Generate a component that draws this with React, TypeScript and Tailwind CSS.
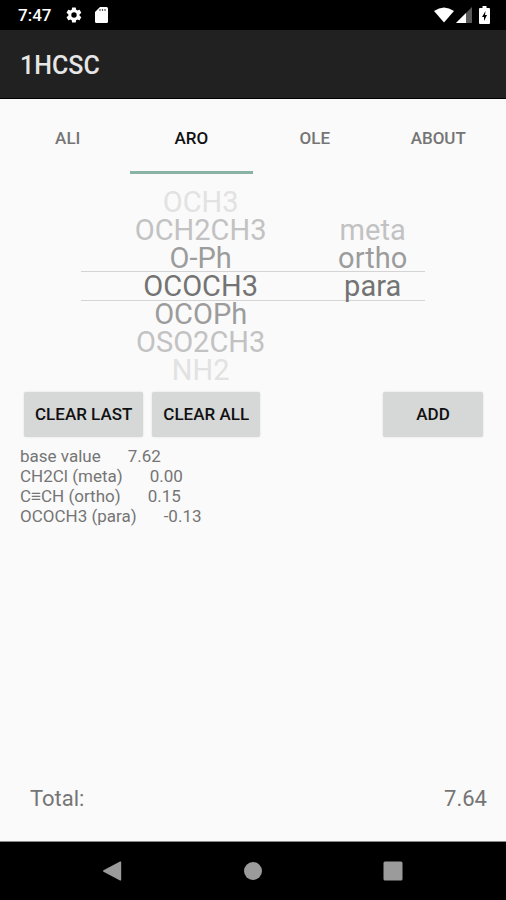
import { useState } from 'react';
import clsx from 'clsx';

interface Entry {
  label: string;
  value: string;
}

const tabs = ['ALI', 'ARO', 'OLE', 'ABOUT'];

const groups = ['OCH3', 'OCH2CH3', 'O-Ph', 'OCOCH3', 'OCOPh', 'OSO2CH3', 'NH2'];
const positions = ['meta', 'ortho', 'para'];

const base: Entry = { label: 'base value', value: '7.62' };

const initialEntries: Entry[] = [
  { label: 'CH2Cl (meta)', value: '0.00' },
  { label: 'C≡CH (ortho)', value: '0.15' },
  { label: 'OCOCH3 (para)', value: '-0.13' },
];

// colours by distance from the selected row
const fade = ['text-[#737373]', 'text-[#9c9c9c]', 'text-[#c2c2c2]', 'text-[#e2e2e2]'];

function StatusBar() {
  return (
    <div className="flex h-[30px] items-center justify-between bg-black pl-[18px] pr-4 text-white">
      <div className="flex items-center">
        <span className="w-[47px] text-[17px] font-medium leading-8">7:47</span>
        <svg className="h-[18px] w-[18px]" viewBox="0 0 24 24" fill="currentColor">
          <path d="M19.4 13a7.8 7.8 0 0 0 0-2l2.1-1.6a.5.5 0 0 0 .1-.6l-2-3.5a.5.5 0 0 0-.6-.2l-2.5 1a7.3 7.3 0 0 0-1.7-1l-.4-2.6a.5.5 0 0 0-.5-.5h-4a.5.5 0 0 0-.5.5L9 5.1a7.7 7.7 0 0 0-1.7 1l-2.5-1a.5.5 0 0 0-.6.2l-2 3.5a.5.5 0 0 0 .1.6L4.500 11a7.800 7.800 0 0 0 0 2l-2.200 1.600a.5.5 0 0 0-.1.6l2 3.500c.1.2.4.3.6.2l2.500-1a7.300 7.300 0 0 0 1.700 1l.4 2.600c0 .3.2.5.5.5h4c.3 0 .5-.2.5-.5l.4-2.600a7.700 7.700 0 0 0 1.700-1l2.500 1c.2.1.5 0 .6-.2l2-3.500a.5.5 0 0 0-.1-.6zM12 15.600a3.600 3.600 0 1 1 0-7.200 3.600 3.600 0 0 1 0 7.200z" />
        </svg>
        <svg className="ml-3 h-4 w-[13px]" viewBox="0 0 13 16">
          <path d="M5 0h6.5A1.5 1.5 0 0 1 13 1.5v13a1.5 1.5 0 0 1-1.5 1.5h-10A1.5 1.5 0 0 1 0 14.5V5z" fill="currentColor" />
          <path d="M5 2v2M7.500 2v2M10 2v2" stroke="#555" strokeWidth="1.200" />
        </svg>
      </div>
      <div className="flex items-center">
        <svg className="h-4 w-5" viewBox="0 0 20 16" fill="currentColor">
          <path d="M0 4Q10-3 20 4L10 15.500z" />
        </svg>
        <svg className="ml-[2px] h-4 w-4" viewBox="0 0 16 16" fill="currentColor">
          <path d="M16 0v16H0z" opacity="0.35" />
          <path d="M10 6v10H0z" />
        </svg>
        <svg className="ml-[7px] h-[18px] w-[11px]" viewBox="0 0 11 18">
          <path d="M3.500 0h4v2H10a1 1 0 0 1 1 1v14a1 1 0 0 1-1 1H1a1 1 0 0 1-1-1V3a1 1 0 0 1 1-1h2.500z" fill="currentColor" />
          <path d="M6.500 5L3 11h2v4L8 9H6z" fill="#000" />
        </svg>
      </div>
    </div>
  );
}

interface WheelProps {
  label: string;
  items: string[];
  selected: number;
  onSelect: (index: number) => void;
}

function Wheel({ label, items, selected, onSelect }: WheelProps) {
  const rows = [-3, -2, -1, 0, 1, 2, 3];
  return (
    <div role="listbox" aria-label={label}>
      {rows.map(offset => {
        const index = selected + offset;
        const item = items[index];
        return (
          <div
            key={offset}
            className={clsx('h-7', offset === 0 && 'shadow-[0_-1px_0_#d4d4d4,0_1px_0_#d4d4d4]')}
          >
            {item && (
              <button
                type="button"
                role="option"
                aria-selected={offset === 0}
                onClick={() => onSelect(index)}
                className={clsx('block w-full text-center text-[29px] leading-7', fade[Math.abs(offset)])}
              >
                {item}
              </button>
            )}
          </div>
        );
      })}
    </div>
  );
}

function ActionButton({ text, className, onClick }: { text: string; className?: string; onClick: () => void }) {
  return (
    <button
      type="button"
      onClick={onClick}
      className={clsx(
        'h-[45px] rounded-[2px] bg-[#d6d7d7] text-[17px] font-medium text-[#111111] shadow-[0_0_2px_#d6d7d7]',
        className,
      )}
    >
      {text}
    </button>
  );
}

export default function App() {
  const [tab, setTab] = useState('ARO');
  const [group, setGroup] = useState(3);
  const [position, setPosition] = useState(2);
  const [entries, setEntries] = useState<Entry[]>(initialEntries);

  const total = [base, ...entries].reduce((sum, e) => sum + Number(e.value), 0);

  function add() {
    setEntries([...entries, { label: `${groups[group]} (${positions[position]})`, value: '0.00' }]);
  }

  return (
    <div className="flex min-h-screen flex-col bg-[#fafafa] font-[Roboto,sans-serif] text-[#757575]">
      <StatusBar />
      <header className="flex h-[69px] items-center border-b border-black bg-[#212121] px-5 pt-1">
        <h1 className="text-[25px] font-medium text-[#e6e6e6]">1HCSC</h1>
      </header>

      <nav className="flex h-[75px] px-[6px]" role="tablist">
        {tabs.map(name => (
          <button
            key={name}
            type="button"
            role="tab"
            aria-selected={tab === name}
            onClick={() => setTab(name)}
            className={clsx(
              'flex-1 border-b-[3px] pt-3 pb-1 text-[17px] font-medium',
              tab === name ? 'border-[#8ab3a5] text-[#111111]' : 'border-transparent text-[#757575]',
            )}
          >
            {name}
          </button>
        ))}
      </nav>

      <main className="flex flex-1 flex-col">
        <div className="mt-[14px] grid grid-cols-[16fr_7fr] px-[81px]">
          <Wheel label="Substituent" items={groups} selected={group} onSelect={setGroup} />
          <Wheel label="Position" items={positions} selected={position} onSelect={setPosition} />
        </div>

        <div className="mt-2 flex gap-[9px] pl-6 pr-[23px]">
          <ActionButton text="CLEAR LAST" className="px-[11px]" onClick={() => setEntries(entries.slice(0, -1))} />
          <ActionButton text="CLEAR ALL" className="px-[11px]" onClick={() => setEntries([])} />
          <ActionButton text="ADD" className="ml-auto w-[100px]" onClick={add} />
        </div>

        <ul className="mt-[9px] px-5 text-[17px] leading-5">
          {[base, ...entries].map((e, i) => (
            <li key={i} className="flex gap-[27px]">
              <span>{e.label}</span>
              <span>{e.value}</span>
            </li>
          ))}
        </ul>

        <div className="mt-auto mb-[26px] flex justify-between pl-[30px] pr-[19px] text-[22px] leading-8">
          <span>Total:</span>
          <span>{total.toFixed(2)}</span>
        </div>
      </main>

      <footer className="flex h-[59px] items-center justify-center gap-[120px] border-t border-[#8a8a8a] bg-black text-[#9b9b9b]">
        <button type="button" aria-label="Back">
          <svg className="h-[22px] w-5" viewBox="0 0 20 22" fill="currentColor">
            <path d="M17 1.500a.8.8 0 0 1 1.200.7v17.600a.8.8 0 0 1-1.200.7L.5 11.700a.8.8 0 0 1 0-1.400z" />
          </svg>
        </button>
        <button type="button" aria-label="Home">
          <svg className="h-5 w-5" viewBox="0 0 20 20" fill="currentColor">
            <circle cx="10" cy="10" r="9" />
          </svg>
        </button>
        <button type="button" aria-label="Recent apps">
          <svg className="h-5 w-5" viewBox="0 0 20 20" fill="currentColor">
            <rect x="0.500" y="0.500" width="19" height="19" rx="1.500" />
          </svg>
        </button>
      </footer>
    </div>
  );
}
